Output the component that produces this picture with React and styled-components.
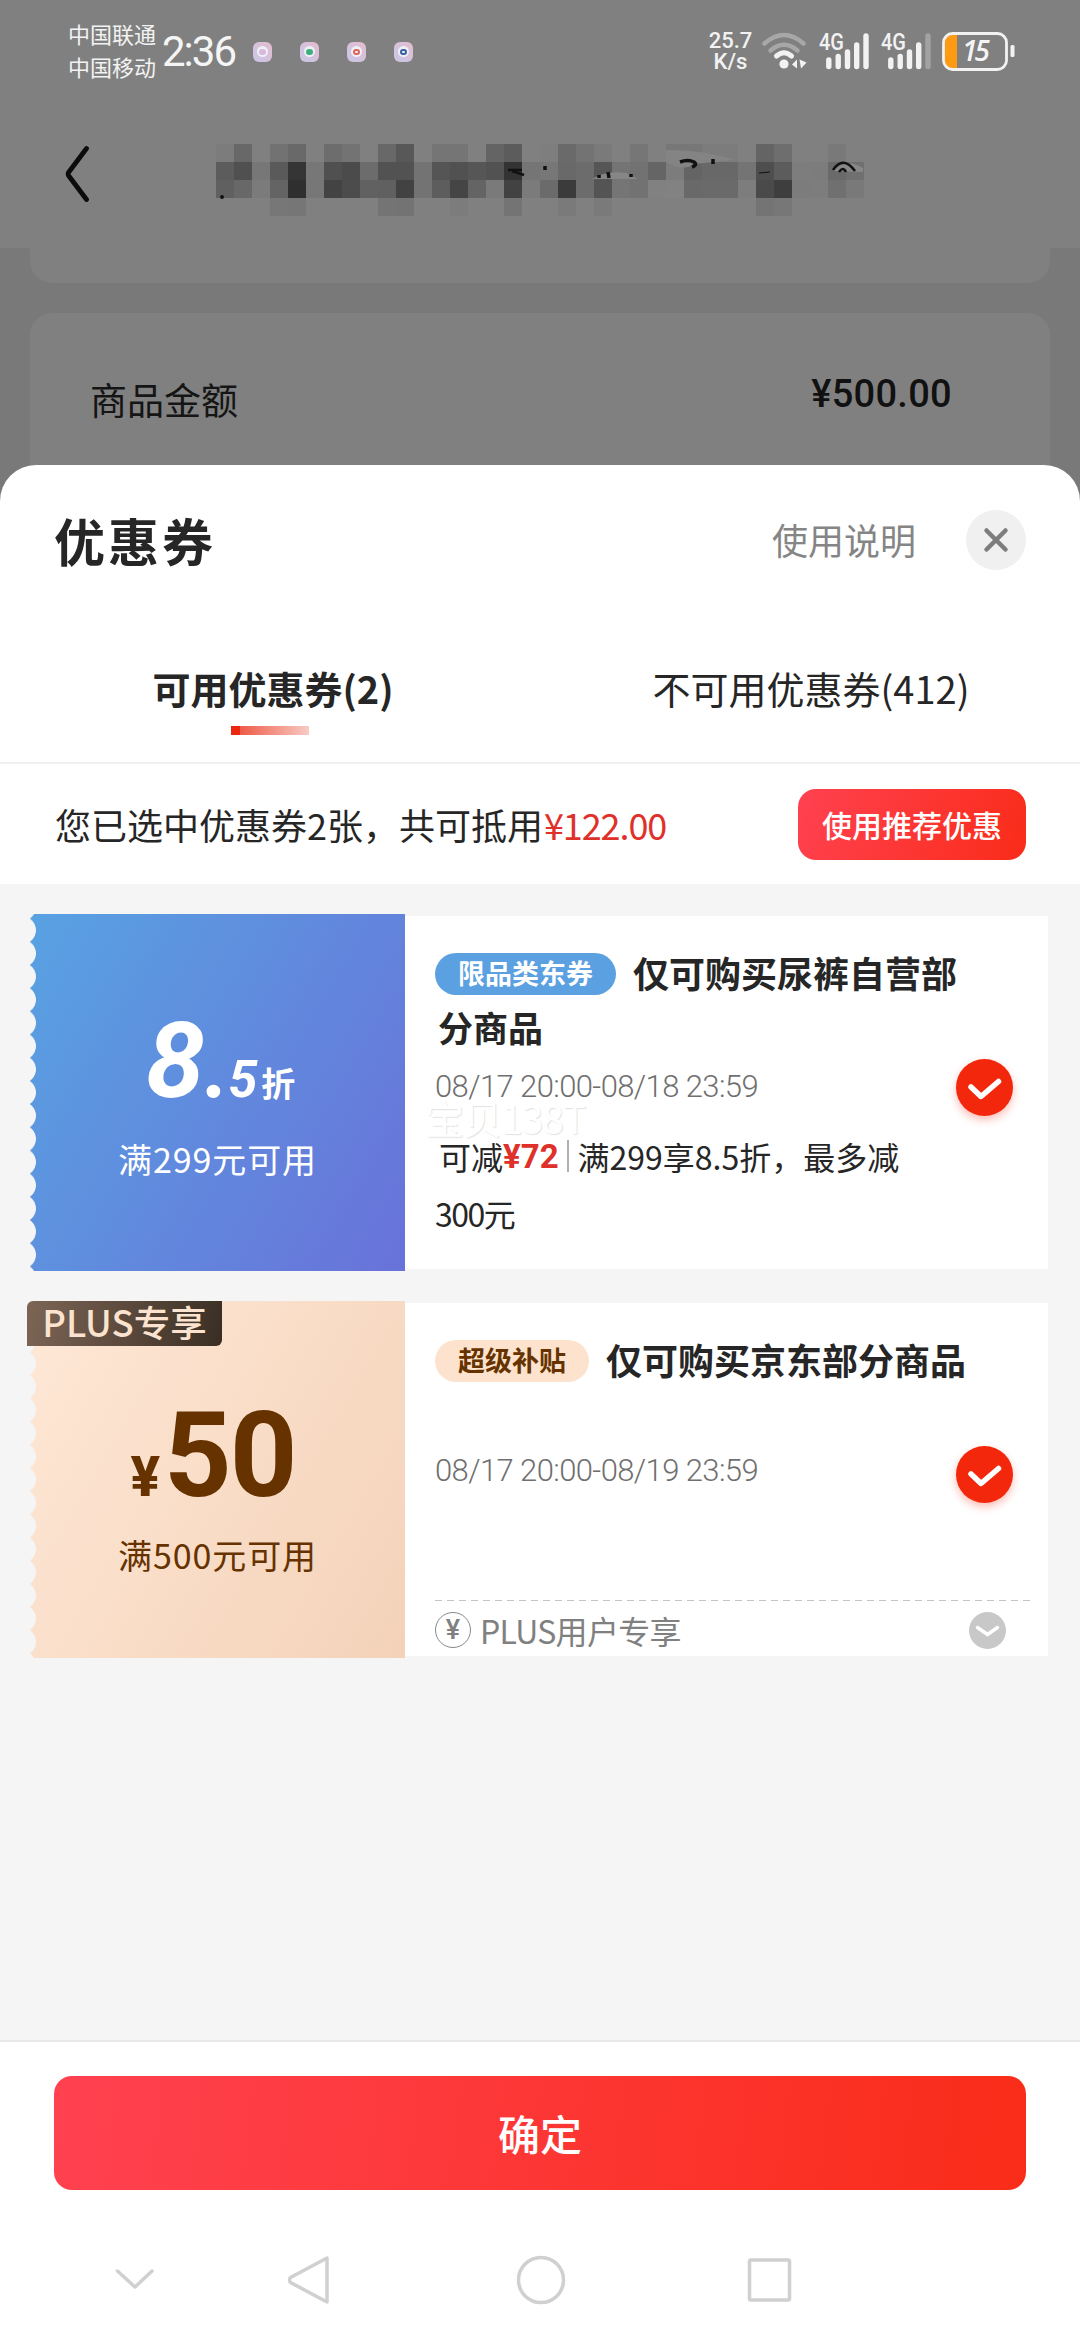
import React from 'react';
import styled, { createGlobalStyle } from 'styled-components';

const cjk = '"Noto Sans CJK SC", sans-serif';
const latin = 'Roboto, "Noto Sans CJK SC", sans-serif';

const Global = createGlobalStyle`
  * { box-sizing: border-box; }
  body { margin: 0; background: #fff; font-family: ${cjk}; }
`;

const Label = styled.span`
  font-family: ${p => (p.$latin ? latin : cjk)};
  font-size: ${p => p.$size}px;
  font-weight: ${p => p.$weight || 400};
  letter-spacing: ${p => p.$track || 0}px;
  line-height: ${p => p.$line || 1};
  color: ${p => p.$color || '#262626'};
  font-style: ${p => (p.$italic ? 'italic' : 'normal')};
  margin-left: ${p => p.$ml || 0}px;
  white-space: nowrap;
`;

const Screen = styled.div`
  width: 1080px;
  height: 2340px;
  overflow: hidden;
  display: flex;
  flex-direction: column;
  background: #fff;
`;

/* dimmed page behind the sheet */
const Backdrop = styled.div`
  height: 501px;
  flex: none;
  background: #797979;
`;
const TopArea = styled.div`
  height: 248px;
  background: #808080;
`;
const StatusBar = styled.div`
  height: 103px;
  display: flex;
  justify-content: space-between;
  padding: 0 64px 0 68px;
`;
const StatusLeft = styled.div`
  display: flex;
  align-items: center;
`;
const Carriers = styled.div`
  display: flex;
  flex-direction: column;
  gap: 11px;
  width: 94px;
  padding-bottom: 5px;
`;
const AppIcons = styled.div`
  display: flex;
  gap: 28px;
  margin-left: 18px;
`;
const AppIcon = styled.div`
  width: 19px;
  height: 20px;
  border-radius: 6px;
  background: linear-gradient(225deg, #e6bccb, #cfc4e2 70%);
  display: flex;
  align-items: center;
  justify-content: center;
`;
const AppDisc = styled.div`
  width: 11px;
  height: 11px;
  border-radius: 50%;
  background: #eef0f8;
  display: flex;
  align-items: center;
  justify-content: center;
`;
const AppDot = styled.div`
  width: 7px;
  height: 6px;
  border-radius: 3px;
  border: ${p => (p.$ring ? 2 : 3)}px solid ${p => p.$color};
`;
const StatusRight = styled.div`
  display: flex;
  align-items: flex-start;
  padding-top: 31px;
`;
const NetSpeed = styled.div`
  display: flex;
  flex-direction: column;
  align-items: center;
  width: 43px;
  margin-right: 10px;
`;
const SignalIcon = styled.svg`
  margin-top: -8px;
`;

const TitleBar = styled.div`
  height: 145px;
  display: flex;
  align-items: flex-start;
  padding: 41px 0 0 65px;
`;
const TitleMosaic = styled.div`
  position: relative;
  display: grid;
  grid-template-columns: repeat(36, 18px);
  grid-auto-rows: 18px;
  margin-left: 127px;
`;
const Tile = styled.i`
  background: ${p => p.$c};
`;
const Strokes = styled.svg`
  position: absolute;
  left: 0;
  top: 0;
`;
const CardTail = styled.div`
  height: 35px;
  margin: 0 30px 30px;
  border-radius: 0 0 22px 22px;
  background: #808080;
`;
const AmountCard = styled.div`
  height: 188px;
  margin: 0 30px;
  padding: 0 98px 0 60px;
  border-radius: 22px 22px 0 0;
  background: #808080;
  display: flex;
  justify-content: space-between;
`;
const AmountName = styled.div`
  padding-top: 68px;
`;
const AmountValue = styled.div`
  padding-top: 62px;
`;

/* sheet */
const Sheet = styled.div`
  position: relative;
  margin-top: -36px;
  height: 1875px;
  border-radius: 36px 36px 0 0;
  background: #fff;
  display: flex;
  flex-direction: column;
`;
const SheetHead = styled.div`
  height: 150px;
  padding: 0 54px;
  display: flex;
  align-items: center;
`;
const Guide = styled.div`
  margin-left: auto;
`;
const Close = styled.div`
  width: 60px;
  height: 60px;
  margin-left: 50px;
  border-radius: 50%;
  background: #f0f0f0;
  display: flex;
  align-items: center;
  justify-content: center;
`;
const Tabs = styled.div`
  height: 149px;
  display: grid;
  grid-template-columns: 1fr 1fr;
  border-bottom: 2px solid #f0f0f0;
`;
const Tab = styled.div`
  display: flex;
  flex-direction: column;
  align-items: center;
  padding-top: 54px;
  padding-left: ${p => p.$shift || 0}px;
`;
const Underline = styled.div`
  width: 78px;
  height: 9px;
  margin: 19px 6px 0 0;
  background: linear-gradient(90deg, #e9280f 9px, #ef5b47 9px, #f7cbc5);
`;
const Summary = styled.div`
  height: 120px;
  display: flex;
  align-items: center;
  padding: 0 54px 0 55px;
`;
const Recommend = styled.div`
  width: 228px;
  height: 71px;
  margin-left: auto;
  border-radius: 18px;
  background: linear-gradient(110deg, #ff4150, #fa2c19);
  display: flex;
  align-items: center;
  justify-content: center;
`;
const List = styled.div`
  height: 1156px;
  padding: 30px 32px 0 30px;
  background: #f5f5f5;
  display: flex;
  flex-direction: column;
  gap: 30px;
`;
const Coupon = styled.div`
  height: 357px;
  display: flex;
  align-items: center;
`;
const Stub = styled.div`
  position: relative;
  width: 375px;
  height: 357px;
  background: ${p => p.$bg};
  display: flex;
  flex-direction: column;
  align-items: center;
  &::before {
    content: '';
    position: absolute;
    left: 0;
    top: 0;
    bottom: 0;
    width: 7px;
    background: radial-gradient(circle at -8px 50%, #f5f5f5 13.5px, transparent 14.3px) 0 4.6px / 7px 23.2px repeat-y;
  }
`;
const Badge = styled.div`
  position: absolute;
  left: -3px;
  top: 0;
  width: 195px;
  height: 45px;
  padding-bottom: 3px;
  border-radius: 6px 0 6px 0;
  background: linear-gradient(100deg, #7c6555, #3a2e24);
  display: flex;
  align-items: center;
  justify-content: center;
`;
const Worth = styled.div`
  height: 84px;
  margin-top: ${p => p.$top}px;
  padding-right: ${p => p.$trail || 0}px;
  padding-left: ${p => p.$lead || 0}px;
  display: flex;
  align-items: baseline;
`;
const Condition = styled.div`
  margin-top: ${p => p.$top}px;
`;
const Detail = styled.div`
  position: relative;
  flex: 1;
  height: 353px;
  padding: 0 17px 0 30px;
  background: #fff;
`;
const TitleRow = styled.div`
  height: 42px;
  margin-top: 37px;
  display: flex;
  align-items: center;
  gap: 17px;
`;
const TitleText = styled.div`
  display: flex;
  padding-bottom: 5px;
`;
const Pill = styled.div`
  width: ${p => p.$w}px;
  height: 42px;
  padding-bottom: 3px;
  border-radius: 21px;
  background: ${p => p.$bg};
  display: flex;
  align-items: center;
  justify-content: center;
`;
const Line = styled.div`
  height: ${p => p.$h}px;
  padding-bottom: ${p => p.$up || 0}px;
  padding-left: ${p => p.$indent || 0}px;
  display: flex;
  align-items: center;
`;
const Divider = styled.div`
  width: 2px;
  height: 32px;
  margin: 0 9px 0 8px;
  background: #b0b0b0;
`;
const Watermark = styled.div`
  position: absolute;
  left: 20px;
  top: 184px;
  font: 400 39px/34px ${cjk};
  letter-spacing: -1px;
  color: #fff;
  text-shadow: 1px 1px 1px #e2e2e2;
`;
const Check = styled.div`
  position: absolute;
  right: 35px;
  top: 143px;
  width: 57px;
  height: 57px;
  border-radius: 50%;
  background: #f2270c;
  box-shadow: 0 4px 8px rgba(242, 39, 12, 0.3);
  display: flex;
`;
const PlusRow = styled.div`
  height: 56px;
  margin-top: 107px;
  padding-top: 4px;
  display: flex;
  align-items: center;
  gap: 9px;
  background: repeating-linear-gradient(90deg, #c4c4c4 0 7px, transparent 7px 12px) 0 0 / 100% 1px no-repeat;
`;
const Coin = styled.div`
  width: 36px;
  height: 36px;
  border: 1.5px solid #888;
  border-radius: 50%;
  display: flex;
  align-items: center;
  justify-content: center;
`;
const Expand = styled.div`
  width: 37px;
  height: 37px;
  margin: 0 25px 0 auto;
  border-radius: 50%;
  background: #c8c8c8;
  display: flex;
`;
const Footer = styled.div`
  height: 300px;
  border-top: 2px solid #e8e8e8;
  padding: 34px 54px 0;
`;
const Confirm = styled.div`
  height: 114px;
  border-radius: 18px;
  background: linear-gradient(97deg, #ff4150, #fa2c19);
  display: flex;
  align-items: center;
  justify-content: center;
`;
const NavBar = styled.div`
  height: 54px;
  margin-top: 63px;
  display: flex;
  align-items: center;
  padding-left: 60px;
`;
const NavIcon = styled.svg`
  margin-right: ${p => p.$gap || 0}px;
  fill: none;
  stroke: #d0d0d0;
  stroke-width: 3.5;
  stroke-linejoin: round;
  stroke-linecap: round;
`;

const tiles = [
  '7c 68 80 72 69 80 6d 73 80 68 58 80 75 75 80 64 5c 80 7e 6a 73 7a 80 76 80 77 77 7c 7c 80 64 6e 80 80 79 80',
  '5c 50 77 5a 35 77 50 4b 6c 52 52 73 55 51 56 52 33 75 77 69 6c 56 74 72 65 7c 64 68 68 74 4e 5c 7d 7c 6a 70',
  '60 68 7b 64 2f 77 43 4c 61 60 42 73 5d 45 64 7a 42 7b 6b 3b 6c 54 75 72 81 82 69 6a 6a 7d 4a 3e 7c 7d 70 79',
  '80 80 80 77 76 80 80 80 80 74 73 80 80 7c 80 80 74 80 80 7a 80 7a 80 80 80 80 80 80 80 80 74 77 80 80 80 80',
].join(' ').split(' ');

const appColors = ['#d9b8dd', '#3fae7c', '#e0645a', '#3a5f9e'];

function Signal({ weak }) {
  return (
    <SignalIcon width="62" height="48" viewBox="-1 -8 62 48">
      <text x="0" y="19" fontFamily="Roboto" fontWeight="500" fontSize="24" textLength="25" lengthAdjust="spacingAndGlyphs" fill="#f2f2f2">4G</text>
      <g stroke="#f2f2f2" strokeWidth="5.4" strokeLinecap="round">
        <path d="M9.8 29v6.5M19.2 25.5v10M28.5 21v14.5M37.7 14v21.5" />
        <path d="M47 5v30.5" opacity={weak ? 0.3 : 1} />
      </g>
    </SignalIcon>
  );
}

function Wifi() {
  return (
    <svg width="56" height="40" viewBox="0 0 56 40" fill="none" stroke="#f2f2f2" strokeLinecap="round" strokeWidth="4.5">
      <path d="M2.5 12.5Q22 -4.5 41.5 12.5" opacity=".35" />
      <path d="M8.5 19.5Q22 8 35.5 19.5" opacity=".35" />
      <path d="M14.5 25Q22 18.5 29.5 25" strokeWidth="5" />
      <circle cx="22" cy="33" r="4.6" fill="#f2f2f2" stroke="none" />
      <path d="M30 33.5l5-5v9zM37.5 28.5l1.5 9 5.5-6z" fill="#f2f2f2" stroke="none" />
    </svg>
  );
}

function Battery() {
  return (
    <svg width="74" height="42" viewBox="0 -1 74 42">
      <path d="M3 10q0-7 7-7h5v33h-5q-7 0-7-7z" fill="#ff9b12" />
      <rect x="1.5" y="1.5" width="63" height="36" rx="9" fill="none" stroke="#f2f2f2" strokeWidth="2.8" />
      <rect x="68.5" y="13" width="4" height="12" rx="1.5" fill="#f2f2f2" />
      <text x="20" y="28.5" fontFamily="Open Sans" fontWeight="600" fontStyle="italic" fontSize="28" letterSpacing="-3" fill="#f5f5f5">15</text>
    </svg>
  );
}

function Tick() {
  return (
    <Check>
      <svg width="57" height="57" viewBox="0 0 57 57" fill="none" stroke="#fff" strokeWidth="5.5" strokeLinecap="round" strokeLinejoin="round">
        <path d="M15 28l10 9.5L42.5 22.5" />
      </svg>
    </Check>
  );
}

export default function App() {
  return (
    <>
      <Global />
      <Screen>
        <Backdrop>
          <TopArea>
            <StatusBar>
              <StatusLeft>
                <Carriers>
                  <Label $size={22} $color="#f2f2f2">中国联通</Label>
                  <Label $size={22} $color="#f2f2f2">中国移动</Label>
                </Carriers>
                <Label $latin $size={42} $track={-2} $color="#f5f5f5">2:36</Label>
                <AppIcons>
                  {appColors.map((c, i) => (
                    <AppIcon key={c}><AppDisc><AppDot $color={c} $ring={i > 1} /></AppDisc></AppIcon>
                  ))}
                </AppIcons>
              </StatusLeft>
              <StatusRight>
                <NetSpeed>
                  <Label $latin $size={22} $weight={500} $line={0.95} $color="#f2f2f2">25.7</Label>
                  <Label $latin $size={22} $weight={500} $line={0.95} $color="#f2f2f2">K/s</Label>
                </NetSpeed>
                <Wifi />
                <Signal />
                <Signal weak />
                <Battery />
              </StatusRight>
            </StatusBar>
            <TitleBar>
              <svg width="24" height="60" viewBox="0 0 24 60" fill="none" stroke="#0b0b0b" strokeWidth="4.8" strokeLinecap="round" strokeLinejoin="round">
                <path d="M21.5 4.5L3.5 28.5Q2.8 30 3.5 31.5L21.5 55.5" />
              </svg>
              <TitleMosaic>
                {tiles.map((t, i) => <Tile key={i} $c={`#${t}${t}${t}`} />)}
                <Strokes width="648" height="72" viewBox="0 0 648 72" fill="none" stroke="#111">
                  <path d="M450 6q40 0 68 10l-40 4q-10 8-28-2z" fill="#848484" stroke="none" />
                  <path d="M376 35q14-9 34-6l12 6z" fill="#868686" stroke="none" />
                  <path d="M617 27q12-14 30-3v4z" fill="#888" stroke="none" />
                  <path d="M464 18q8-3 14 0q4 3-2 5" strokeWidth="3.5" />
                  <path d="M497 15v5M329 22v4M383 31v3M392 28l1 6M415 30v3" strokeWidth="3.5" />
                  <path d="M292 26l14 0M296 27l12 4" strokeWidth="2.5" />
                  <path d="M543 29l11-1" strokeWidth="1" />
                  <path d="M617 26q10-15 22 1" strokeWidth="2.5" />
                  <path d="M623 28q4-6 7 0" strokeWidth="2.5" />
                  <circle cx="6" cy="53" r="2" fill="#111" stroke="none" />
                </Strokes>
              </TitleMosaic>
            </TitleBar>
          </TopArea>
          <CardTail />
          <AmountCard>
            <AmountName><Label $size={37} $color="#151515">商品金额</Label></AmountName>
            <AmountValue><Label $latin $size={38} $weight={500} $track={0.3} $color="#111">¥500.00</Label></AmountValue>
          </AmountCard>
        </Backdrop>

        <Sheet>
          <SheetHead>
            <Label $size={51} $weight={700} $track={3}>优惠券</Label>
            <Guide><Label $size={36} $color="#858585">使用说明</Label></Guide>
            <Close>
              <svg width="28" height="28" viewBox="0 0 28 28" stroke="#7d7d7d" strokeWidth="4.5" strokeLinecap="round">
                <path d="M4.5 4.5l19 19M23.5 4.5l-19 19" />
              </svg>
            </Close>
          </SheetHead>
          <Tabs>
            <Tab $shift={6}>
              <Label $size={38} $weight={700}>可用优惠券(2)</Label>
              <Underline />
            </Tab>
            <Tab $shift={2}>
              <Label $size={38}>不可用优惠券(412)</Label>
            </Tab>
          </Tabs>
          <Summary>
            <Label $size={36}>您已选中优惠券2张，共可抵用</Label>
            <Label $size={36} $track={-1.1} $ml={1} $color="#e0302a">¥122.00</Label>
            <Recommend><Label $size={30} $weight={500} $color="#fff">使用推荐优惠</Label></Recommend>
          </Summary>
          <List>
            <Coupon>
              <Stub $bg="linear-gradient(120deg, #58a2e2, #6972d9)">
                <Worth $top={94} $lead={6}>
                  <Label $latin $italic $size={106} $weight={700} $color="#fff">8</Label>
                  <Label $latin $italic $size={88} $weight={700} $track={-1} $color="#fff">.</Label>
                  <Label $latin $italic $size={52} $weight={700} $color="#fff">5</Label>
                  <Label $size={34} $weight={700} $ml={4} $color="#fff">折</Label>
                </Worth>
                <Condition $top={50}><Label $size={34} $track={0.9} $color="#fff">满299元可用</Label></Condition>
              </Stub>
              <Detail>
                <TitleRow>
                  <Pill $w={181} $bg="#5ba0e0"><Label $size={27} $weight={700} $color="#fff">限品类东券</Label></Pill>
                  <TitleText><Label $size={36} $weight={700}>仅可购买尿裤自营部</Label></TitleText>
                </TitleRow>
                <Line $h={68} $up={5} $indent={3}><Label $size={35} $weight={700}>分商品</Label></Line>
                <Line $h={46}><Label $latin $size={31} $weight={300} $track={-0.6} $color="#6f6f6f">08/17 20:00-08/18 23:59</Label></Line>
                <Watermark>宝贝138T</Watermark>
                <Line $h={96} $up={2} $indent={4}>
                  <Label $size={32}>可减</Label>
                  <Label $latin $size={33} $weight={700} $color="#e0302a">¥72</Label>
                  <Divider />
                  <Label $size={32}>满299享8.5折，最多减</Label>
                </Line>
                <Line $h={20} $up={5}><Label $size={32} $track={-1.5}>300元</Label></Line>
                <Tick />
              </Detail>
            </Coupon>
            <Coupon>
              <Stub $bg="linear-gradient(120deg, #fee8d6, #f4d2b9)">
                <Badge><Label $size={36.5} $weight={500} $color="#fbe3cf">PLUS专享</Label></Badge>
                <Worth $top={96} $trail={9}>
                  <Label $latin $size={55} $weight={800} $track={4} $color="#663300">¥</Label>
                  <Label $latin $size={118} $weight={700} $track={-2} $color="#663300">50</Label>
                </Worth>
                <Condition $top={57}><Label $size={34} $track={0.9} $color="#663300">满500元可用</Label></Condition>
              </Stub>
              <Detail>
                <TitleRow>
                  <Pill $w={154} $bg="#fde3cd"><Label $size={27} $weight={700} $color="#663300">超级补贴</Label></Pill>
                  <TitleText><Label $size={36} $weight={700}>仅可购买京东部分商品</Label></TitleText>
                </TitleRow>
                <Line $h={65} />
                <Line $h={46}><Label $latin $size={31} $weight={300} $track={-0.6} $color="#6f6f6f">08/17 20:00-08/19 23:59</Label></Line>
                <PlusRow>
                  <Coin><Label $latin $size={27} $weight={500} $color="#808080">¥</Label></Coin>
                  <Label $size={32} $track={-0.7} $color="#808080">PLUS用户专享</Label>
                  <Expand>
                    <svg width="37" height="37" viewBox="0 0 37 37" fill="none" stroke="#fff" strokeWidth="3.5" strokeLinecap="round" strokeLinejoin="round">
                      <path d="M8.5 15.5l10 7 10-7" />
                    </svg>
                  </Expand>
                </PlusRow>
                <Tick />
              </Detail>
            </Coupon>
          </List>
          <Footer>
            <Confirm><Label $size={42} $weight={500} $color="#fff">确定</Label></Confirm>
            <NavBar>
              <NavIcon width="42" height="54" viewBox="0 0 42 54" $gap={131}><path d="M3.5 18L21 34 38 18" /></NavIcon>
              <NavIcon width="44" height="54" viewBox="0 0 44 54" $gap={185}><path d="M40 5v44L3.5 29.5Q1.5 27 3.5 24.5z" /></NavIcon>
              <NavIcon width="50" height="54" viewBox="0 0 50 54" $gap={181}><circle cx="25" cy="27" r="22.5" /></NavIcon>
              <NavIcon width="46" height="54" viewBox="0 0 46 54"><rect x="2.5" y="7" width="40" height="40" rx="1.5" /></NavIcon>
            </NavBar>
          </Footer>
        </Sheet>
      </Screen>
    </>
  );
}
